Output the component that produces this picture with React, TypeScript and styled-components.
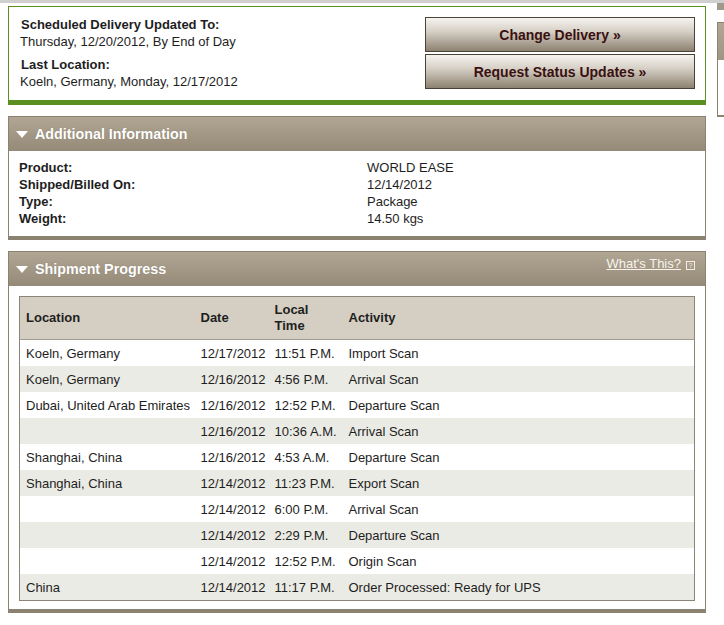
import React from "react";
import styled, { createGlobalStyle } from "styled-components";

const GREEN = "#5b9020";
const TAUPE = "#8c8272";

const GlobalStyles = createGlobalStyle`
  html, body {
    margin: 0;
    padding: 0;
    background: #fff;
  }
  body {
    font-family: "Liberation Sans", Arial, sans-serif;
    font-size: 13px;
    color: #1e1e1e;
  }
`;

type Row = {
  location: string;
  date: string;
  time: string;
  activity: string;
};

const progress: Row[] = [
  { location: "Koeln, Germany", date: "12/17/2012", time: "11:51 P.M.", activity: "Import Scan" },
  { location: "Koeln, Germany", date: "12/16/2012", time: "4:56 P.M.", activity: "Arrival Scan" },
  { location: "Dubai, United Arab Emirates", date: "12/16/2012", time: "12:52 P.M.", activity: "Departure Scan" },
  { location: "", date: "12/16/2012", time: "10:36 A.M.", activity: "Arrival Scan" },
  { location: "Shanghai, China", date: "12/16/2012", time: "4:53 A.M.", activity: "Departure Scan" },
  { location: "Shanghai, China", date: "12/14/2012", time: "11:23 P.M.", activity: "Export Scan" },
  { location: "", date: "12/14/2012", time: "6:00 P.M.", activity: "Arrival Scan" },
  { location: "", date: "12/14/2012", time: "2:29 P.M.", activity: "Departure Scan" },
  { location: "", date: "12/14/2012", time: "12:52 P.M.", activity: "Origin Scan" },
  { location: "China", date: "12/14/2012", time: "11:17 P.M.", activity: "Order Processed: Ready for UPS" },
];

const info = [
  ["Product:", "WORLD EASE"],
  ["Shipped/Billed On:", "12/14/2012"],
  ["Type:", "Package"],
  ["Weight:", "14.50 kgs"],
];

function App() {
  return (
    <>
      <GlobalStyles />
      <Page>
        <Main>
          <StatusPanel>
            <StatusText>
              <Group>
                <Label>Scheduled Delivery Updated To:</Label>
                <Value>Thursday, 12/20/2012, By End of Day</Value>
              </Group>
              <Group>
                <Label>Last Location:</Label>
                <Value>Koeln, Germany, Monday, 12/17/2012</Value>
              </Group>
            </StatusText>
            <Actions>
              <ActionButton>Change Delivery »</ActionButton>
              <ActionButton>Request Status Updates »</ActionButton>
            </Actions>
          </StatusPanel>

          <Panel>
            <PanelHeader>
              <Caret />
              <PanelTitle>Additional Information</PanelTitle>
            </PanelHeader>
            <InfoBody>
              {info.map(([k, v]) => (
                <React.Fragment key={k}>
                  <InfoLabel>{k}</InfoLabel>
                  <InfoValue>{v}</InfoValue>
                </React.Fragment>
              ))}
            </InfoBody>
          </Panel>

          <Panel>
            <PanelHeader>
              <Caret />
              <PanelTitle>Shipment Progress</PanelTitle>
              <Help>
                <HelpLink href="#">What's This?</HelpLink>
                <HelpIcon>?</HelpIcon>
              </Help>
            </PanelHeader>
            <TableBody>
              <ProgressTable>
                <colgroup>
                  <col style={{ width: 175 }} />
                  <col style={{ width: 74 }} />
                  <col style={{ width: 74 }} />
                  <col />
                </colgroup>
                <thead>
                  <tr>
                    <Th>Location</Th>
                    <Th>Date</Th>
                    <Th>
                      Local
                      <br />
                      Time
                    </Th>
                    <Th>Activity</Th>
                  </tr>
                </thead>
                <tbody>
                  {progress.map((r, i) => (
                    <Tr key={i} $alt={i % 2 === 1}>
                      <Td>{r.location}</Td>
                      <Td>{r.date}</Td>
                      <Td>{r.time}</Td>
                      <Td>{r.activity}</Td>
                    </Tr>
                  ))}
                </tbody>
              </ProgressTable>
            </TableBody>
          </Panel>
        </Main>

        <Side>
          <SideCap />
          <SideBox>
            <SideHeader />
          </SideBox>
        </Side>
      </Page>
    </>
  );
}

export default App;

const Page = styled.div`
  display: flex;
  align-items: flex-start;
  border-top: 3px solid #cfcfcf;
  padding: 3px 0 0 8px;
  overflow: hidden;
`;

const Main = styled.div`
  width: 698px;
  flex: none;
`;

const StatusPanel = styled.div`
  display: flex;
  justify-content: space-between;
  border: 1px solid ${GREEN};
  border-bottom: 5px solid ${GREEN};
  padding: 10px 10px 10px 11px;
`;

const StatusText = styled.div`
  display: flex;
  flex-direction: column;
  gap: 6px;
  margin-top: -1px;
`;

const Group = styled.div`
  display: flex;
  flex-direction: column;
  line-height: 17px;
`;

const Label = styled.div`
  font-weight: bold;
  padding-left: 1px;
`;

const Value = styled.div``;

const Actions = styled.div`
  display: flex;
  flex-direction: column;
  gap: 2px;
`;

const ActionButton = styled.button`
  width: 270px;
  height: 35px;
  border: 1px solid #4a4237;
  background: linear-gradient(#f6f4f0 0%, #d6d0c6 40%, #8d8271 100%);
  color: #3a1010;
  font-family: "Liberation Sans", Arial, sans-serif;
  font-size: 14px;
  font-weight: bold;
  padding: 0;
  cursor: pointer;
`;

const Panel = styled.section`
  margin-top: 11px;
  border: 1px solid ${TAUPE};
  border-bottom: 4px solid ${TAUPE};
`;

const PanelHeader = styled.div`
  display: flex;
  align-items: center;
  height: 34px;
  padding: 0 10px 0 7px;
  background: linear-gradient(#b1a694, #958a78);
`;

const Caret = styled.span`
  width: 0;
  height: 0;
  border-left: 6px solid transparent;
  border-right: 6px solid transparent;
  border-top: 7px solid #fff;
  margin-right: 7px;
`;

const PanelTitle = styled.h2`
  margin: 0;
  flex: 1;
  color: #fff;
  font-size: 14.3px;
  font-weight: bold;
  text-shadow: 0 0 1px rgba(80, 70, 55, 0.4);
`;

const Help = styled.div`
  display: flex;
  align-items: center;
  gap: 5px;
  align-self: flex-start;
  margin-top: 4px;
`;

const HelpLink = styled.a`
  color: #f7f3ec;
  font-size: 13px;
  text-decoration: underline;
`;

const HelpIcon = styled.span`
  width: 7px;
  height: 7px;
  border: 1px solid #f2eee6;
  color: #f2eee6;
  font-size: 7px;
  line-height: 7px;
  text-align: center;
  margin-top: 3px;
`;

const InfoBody = styled.div`
  display: grid;
  grid-template-columns: 348px 1fr;
  line-height: 17px;
  padding: 8px 10px 9px;
  background: #fff;
`;

const InfoLabel = styled.div`
  font-weight: bold;
`;

const InfoValue = styled.div``;

const TableBody = styled.div`
  padding: 10px 10px 8px;
  background: #fff;
`;

const ProgressTable = styled.table`
  width: 100%;
  border-collapse: collapse;
  table-layout: fixed;
  border: 1px solid #8c8577;
`;

const Th = styled.th`
  height: 42px;
  padding: 0 6px;
  text-align: left;
  vertical-align: middle;
  font-size: 13px;
  line-height: 16px;
  background: #d5cec2;
  border-bottom: 1px solid #a39b8d;
`;

const Tr = styled.tr<{ $alt: boolean }>`
  background: ${({ $alt }) => ($alt ? "#ebebe5" : "#fff")};
`;

const Td = styled.td`
  height: 26px;
  padding: 0 6px;
  white-space: nowrap;
  vertical-align: middle;
`;

const Side = styled.div`
  flex: 1;
  margin-left: 11px;
`;

const SideCap = styled.div`
  height: 8px;
  margin-top: -4px;
  background: #a1998b;
`;

const SideBox = styled.div`
  margin-top: 12px;
  height: 92px;
  border-left: 1px solid ${TAUPE};
  border-top: 1px solid ${TAUPE};
  border-bottom: 2px solid ${TAUPE};
`;

const SideHeader = styled.div`
  height: 37px;
  background: linear-gradient(#b1a694, #9f9583);
`;
